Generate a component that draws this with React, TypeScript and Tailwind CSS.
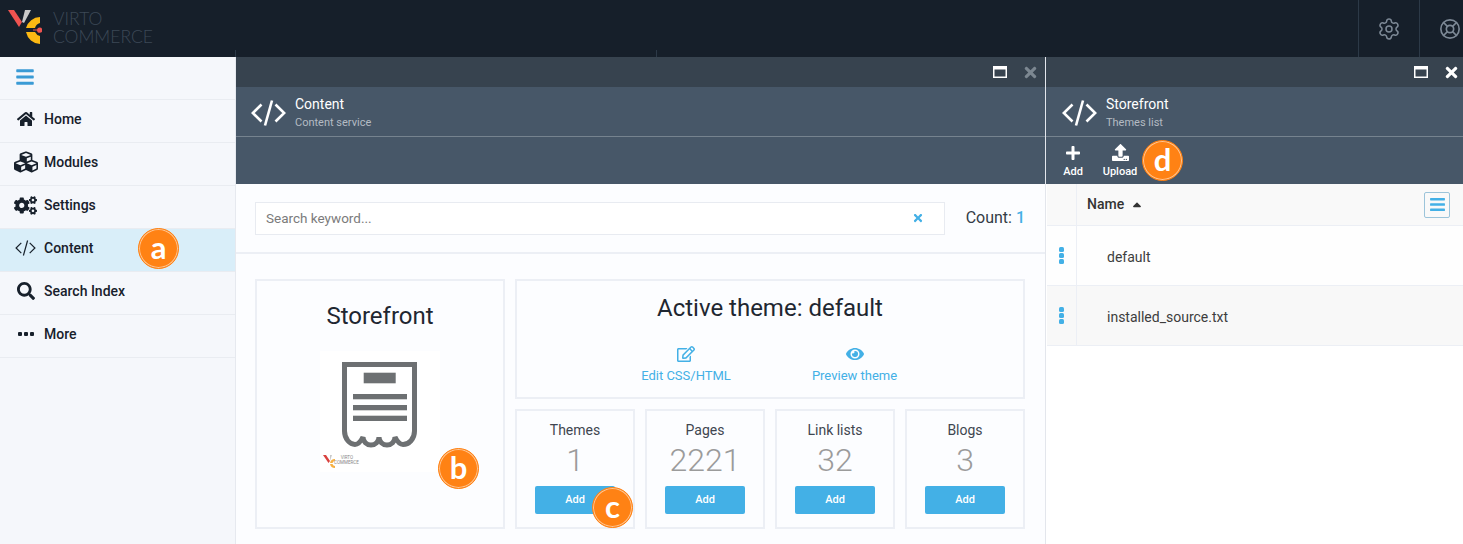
import React from 'react';
import { FaHome, FaCubes, FaCogs, FaSearch, FaBars, FaTimes, FaPlus, FaUpload, FaRegEdit, FaEye, FaSortUp } from 'react-icons/fa';
import { Settings, LifeBuoy } from 'lucide-react';

const Badge: React.FC<{ letter: string; className: string }> = ({ letter, className }) => (
  <div className={`absolute z-10 flex h-[41px] w-[41px] items-center justify-center rounded-full border border-[#ff8214] bg-[#ff8214] pb-[3px] font-['Lato',sans-serif] text-[31px] leading-none font-bold text-white shadow-[inset_0_0_0_1px_#ffc592] ${className}`}>
    {letter}
  </div>
);

const Logo: React.FC = () => (
  <svg width="42" height="46" viewBox="0 0 42 46" className="shrink-0">
    <polygon points="8,10 14,10 22,22 19,27" fill="#ef5350" />
    <polygon points="25,10 31,10 24,23 22,22" fill="#c9c9c9" />
    <path d="M40 17 A15 15 0 0 0 26 28 L35 28 A7 7 0 0 1 40 23 Z" fill="#fdb913" />
    <path d="M26 32 A15 15 0 0 0 40 44 L40 36 A7 7 0 0 1 35 32 Z" fill="#fdb913" />
    <rect x="33" y="29.5" width="5" height="1" fill="#ef5350" />
    <circle cx="39.7" cy="30.2" r="2.6" fill="#ef5350" />
  </svg>
);

const CodeIcon: React.FC<{ className: string; stroke: number }> = ({ className, stroke }) => (
  <svg viewBox="0 0 35 26" fill="none" stroke="currentColor" strokeWidth={stroke} className={className}>
    <polyline points="10.5,4.5 1.8,13 10.5,21.5" />
    <line x1="21" y1="0.5" x2="14" y2="25.5" />
    <polyline points="24.5,4.5 33.2,13 24.5,21.5" />
  </svg>
);

const MaximizeIcon: React.FC = () => (
  <svg width="14" height="12" viewBox="0 0 14 12" className="shrink-0">
    <rect x="0.75" y="1.5" width="12.5" height="9.75" fill="none" stroke="currentColor" strokeWidth="1.5" />
    <rect x="0" y="0" width="14" height="3.5" fill="currentColor" />
  </svg>
);

const DotsIcon: React.FC = () => (
  <span className="flex gap-[2px]">
    <span className="h-[4px] w-[4px] rounded-[1px] bg-current" />
    <span className="h-[4px] w-[4px] rounded-[1px] bg-current" />
    <span className="h-[4px] w-[4px] rounded-[1px] bg-current" />
  </span>
);

const navItems = [
  { label: 'Home', icon: <FaHome className="text-[18px]" /> },
  { label: 'Modules', icon: <FaCubes className="text-[24px]" /> },
  { label: 'Settings', icon: <FaCogs className="text-[23px]" /> },
  { label: 'Content', icon: <CodeIcon className="h-[18px] w-[21px]" stroke={2} />, active: true },
  { label: 'Search Index', icon: <FaSearch className="text-[18px]" /> },
  { label: 'More', icon: <DotsIcon /> },
];

const Sidebar: React.FC = () => (
  <aside className="w-[236px] shrink-0 border-r border-[#e6e9ef] bg-[#f5f7fb]">
    <div className="flex h-[43px] items-center border-b border-[#e9ecf1] pb-[2px] pl-[15px] text-[#3a9bd5]">
      <FaBars className="text-[20px]" />
    </div>
    {navItems.map((item) => (
      <div
        key={item.label}
        className={`relative flex h-[43px] items-center border-b border-[#e9ecf1] pb-[4px] text-[14px] font-medium text-[#17202b] ${item.active ? 'bg-[#d9eef9]' : ''}`}
      >
        <span className="flex w-[44px] shrink-0 justify-center pl-[7px]">{item.icon}</span>
        {item.label}
        {item.active && <Badge letter="a" className="top-[-1px] left-[138px]" />}
      </div>
    ))}
  </aside>
);

interface BladeHeadProps {
  title: string;
  subtitle: string;
  barClass: string;
  closeClass: string;
  headClass: string;
  children?: React.ReactNode;
}

const BladeHead: React.FC<BladeHeadProps> = ({ title, subtitle, barClass, closeClass, headClass, children }) => (
  <div className="shrink-0">
    <div className={`flex h-[30px] items-center justify-end gap-[15px] bg-[#37434f] text-white ${barClass}`}>
      <MaximizeIcon />
      <FaTimes className={`text-[17px] ${closeClass}`} />
    </div>
    <div className={`flex h-[50px] items-center border-b border-[#76838f] bg-[#475768] text-white ${headClass}`}>
      <CodeIcon className="mt-[2px] h-[26px] w-[35px]" stroke={2.6} />
      <div className="mt-[2px] ml-[9px]">
        <div className="text-[14px] leading-[18px]">{title}</div>
        <div className="mt-[3px] text-[11px] leading-[14px] text-[#b4bbc3]">{subtitle}</div>
      </div>
    </div>
    <div className="relative flex h-[47px] bg-[#475768]">{children}</div>
  </div>
);

const ToolButton: React.FC<{ label: string; icon: React.ReactNode; className: string }> = ({ label, icon, className }) => (
  <div className={`flex flex-col items-center pt-[6px] text-[11px] leading-[14px] font-medium text-white ${className}`}>
    <span className="flex h-[19px] items-center">{icon}</span>
    <span className="mt-[3px]">{label}</span>
  </div>
);

const tiles = [
  { label: 'Themes', value: '1' },
  { label: 'Pages', value: '2221' },
  { label: 'Link lists', value: '32' },
  { label: 'Blogs', value: '3' },
];

const Tile: React.FC<{ label: string; value: string; children?: React.ReactNode }> = ({ label, value, children }) => (
  <div className="relative flex h-[120px] w-[120px] flex-col items-center border-2 border-[#eceff5] pt-[10px]">
    <div className="text-[14px] leading-[18px] text-[#3f4650]">{label}</div>
    <div className="mt-[3px] text-[32px] leading-[36px] font-light text-[#9b9b9b]">{value}</div>
    <div className="mt-[8px] flex h-[28px] w-[80px] items-center justify-center rounded-[2px] bg-[#43b0e6] text-[11px] font-medium text-white">Add</div>
    {children}
  </div>
);

const ReceiptArt: React.FC = () => (
  <div className="relative mx-auto mt-[21px] h-[121px] w-[120px] bg-white">
    <svg width="120" height="121" viewBox="0 0 120 121" className="absolute top-0 left-0">
      <path
        d="M24.5 13.5 H94.5 V80 C94.5 88 89 93.5 83 93.5 C79 93.5 77 90 75 86 A8 8 0 0 1 59 86 A8 8 0 0 1 43 86 C41 90 39 93.5 35 93.5 C30 93.5 24.5 88 24.5 80 Z"
        fill="none"
        stroke="#6d7072"
        strokeWidth="5"
      />
      <rect x="43.7" y="21.7" width="32" height="10.6" fill="#6d7072" />
      <rect x="33" y="43" width="54" height="5.3" fill="#6d7072" />
      <rect x="33" y="54" width="54" height="5.3" fill="#6d7072" />
      <rect x="33" y="64.7" width="54" height="5.3" fill="#6d7072" />
      <polygon points="3,104 6,104 10,110 8.5,112" fill="#d9413e" />
      <polygon points="10,104 12,104 10,110" fill="#c9c9c9" />
      <path d="M15 108 A5 5 0 0 0 10 112 L12.5 112 A3 3 0 0 1 15 110 Z" fill="#f6b043" />
      <path d="M10 113 A5 5 0 0 0 15 117 L15 115 A3 3 0 0 1 12.5 113 Z" fill="#f6b043" />
    </svg>
    <div className="absolute top-[104px] left-[14px] text-[4.5px] leading-[5px] text-[#888]">
      <div className="ml-[1px]">VIRTO</div>
      <div>COMMERCE</div>
    </div>
  </div>
);

const ContentBlade: React.FC = () => (
  <section className="flex w-[809px] shrink-0 flex-col bg-[#fcfdff]">
    <BladeHead title="Content" subtitle="Content service" barClass="pr-[6px]" closeClass="text-[#7c8791]" headClass="pl-[15px]" />
    <div className="flex h-[70px] shrink-0 items-center border-b-2 border-[#eceff5] pr-[20px] pl-[19px]">
      <div className="flex h-[33px] w-[690px] items-center justify-between border border-[#e8ebf1] bg-white pr-[20px] pl-[10px] text-[13.5px] text-[#7b7b7b]">
        Search keyword...
        <FaTimes className="text-[12px] text-[#43b0e6]" />
      </div>
      <div className="ml-auto text-[16px] text-[#333c46]">
        Count: <span className="font-medium text-[#43b0e6]">1</span>
      </div>
    </div>
    <div className="flex gap-[10px] pt-[25px] pl-[19px]">
      <div className="relative h-[250px] w-[250px] border-2 border-[#eceff5] text-center">
        <div className="mt-[21px] text-[24px] leading-[28px] text-[#1f2731]">Storefront</div>
        <ReceiptArt />
        <Badge letter="b" className="top-[167px] left-[181px]" />
      </div>
      <div className="flex w-[510px] flex-col gap-[10px]">
        <div className="h-[120px] border-2 border-[#eceff5] pt-[13px] text-center">
          <div className="text-[24px] leading-[28px] text-[#1f2731]">Active theme: default</div>
          <div className="mt-[23px] flex text-[13px] leading-[16px] whitespace-nowrap text-[#43b0e6]">
            <div className="ml-[124px] flex w-[90px] flex-col items-center">
              <FaRegEdit className="mb-[5px] text-[18px]" />
              Edit CSS/HTML
            </div>
            <div className="ml-[81px] flex w-[85px] flex-col items-center">
              <FaEye className="mb-[5px] text-[18px]" />
              Preview theme
            </div>
          </div>
        </div>
        <div className="flex gap-[10px]">
          {tiles.map((tile) => (
            <Tile key={tile.label} label={tile.label} value={tile.value}>
              {tile.label === 'Themes' && <Badge letter="c" className="top-[76px] left-[75px]" />}
            </Tile>
          ))}
        </div>
      </div>
    </div>
  </section>
);

const rows = [
  { name: 'default', bg: 'bg-[#fefefe]' },
  { name: 'installed_source.txt', bg: 'bg-[#f8f8f8]' },
];

const RowMenu: React.FC = () => (
  <span className="flex flex-col gap-[1px]">
    <span className="h-[5px] w-[5px] rounded-[1.5px] bg-[#43b0e6]" />
    <span className="h-[5px] w-[5px] rounded-[1.5px] bg-[#43b0e6]" />
    <span className="h-[5px] w-[5px] rounded-[1.5px] bg-[#43b0e6]" />
  </span>
);

const StorefrontBlade: React.FC = () => (
  <section className="flex flex-1 flex-col border-l border-[#e3e6ec] bg-white">
    <BladeHead title="Storefront" subtitle="Themes list" barClass="pr-[3px]" closeClass="text-white" headClass="pl-[16px]">
      <ToolButton label="Add" icon={<FaPlus className="text-[16px]" />} className="ml-[15px] w-[24px]" />
      <ToolButton label="Upload" icon={<FaUpload className="text-[17px]" />} className="ml-[17px] w-[36px]" />
      <Badge letter="d" className="top-[3px] left-[96px]" />
    </BladeHead>
    <div className="ml-px flex h-[42px] items-center border-b border-[#eceff5] bg-[#f9f9f9] pr-[13px]">
      <div className="h-full w-[30px] border-r border-[#eceff5]" />
      <div className="ml-[10px] flex items-center text-[14px] font-medium text-[#333]">
        Name
        <FaSortUp className="mt-[6px] ml-[6px] text-[14px]" />
      </div>
      <div className="ml-auto flex h-[26px] w-[26px] items-center justify-center rounded-[2px] border border-[#9cc4da] text-[#43b0e6]">
        <FaBars className="text-[17px]" />
      </div>
    </div>
    {rows.map((row) => (
      <div key={row.name} className={`ml-px flex h-[60px] items-center border-b border-[#eceff5] ${row.bg}`}>
        <div className="flex h-full w-[30px] items-center justify-center border-r border-[#eceff5]">
          <RowMenu />
        </div>
        <div className="ml-[30px] pt-[3px] text-[14px] text-[#3d3d3d]">{row.name}</div>
      </div>
    ))}
  </section>
);

const App: React.FC = () => (
  <div className="flex h-[544px] w-[1463px] flex-col overflow-hidden bg-white font-['Roboto',sans-serif]">
    <header className="flex h-[57px] shrink-0 bg-[#161f2a]">
      <Logo />
      <div className="mt-[10px] ml-[11px] font-['Lato',sans-serif] text-[17.5px] leading-[18px] font-light text-[#3c4856]">
        <div>VIRTO</div>
        <div>COMMERCE</div>
      </div>
      <div className="mt-auto ml-[82px] h-[7px] w-px bg-[#2c3947]" />
      <div className="mt-auto ml-[420px] h-[7px] w-px bg-[#2c3947]" />
      <div className="ml-auto flex h-full w-[61px] items-center justify-center border-l border-[#2c3947] text-[#7d8996]">
        <Settings size={24} strokeWidth={1.5} />
      </div>
      <div className="flex h-full w-[44px] items-center overflow-hidden border-l border-[#2c3947] pl-[19px] text-[#7d8996]">
        <LifeBuoy size={22} strokeWidth={1.8} className="shrink-0" />
      </div>
    </header>
    <main className="flex min-h-0 flex-1">
      <Sidebar />
      <ContentBlade />
      <StorefrontBlade />
    </main>
  </div>
);

export default App;
